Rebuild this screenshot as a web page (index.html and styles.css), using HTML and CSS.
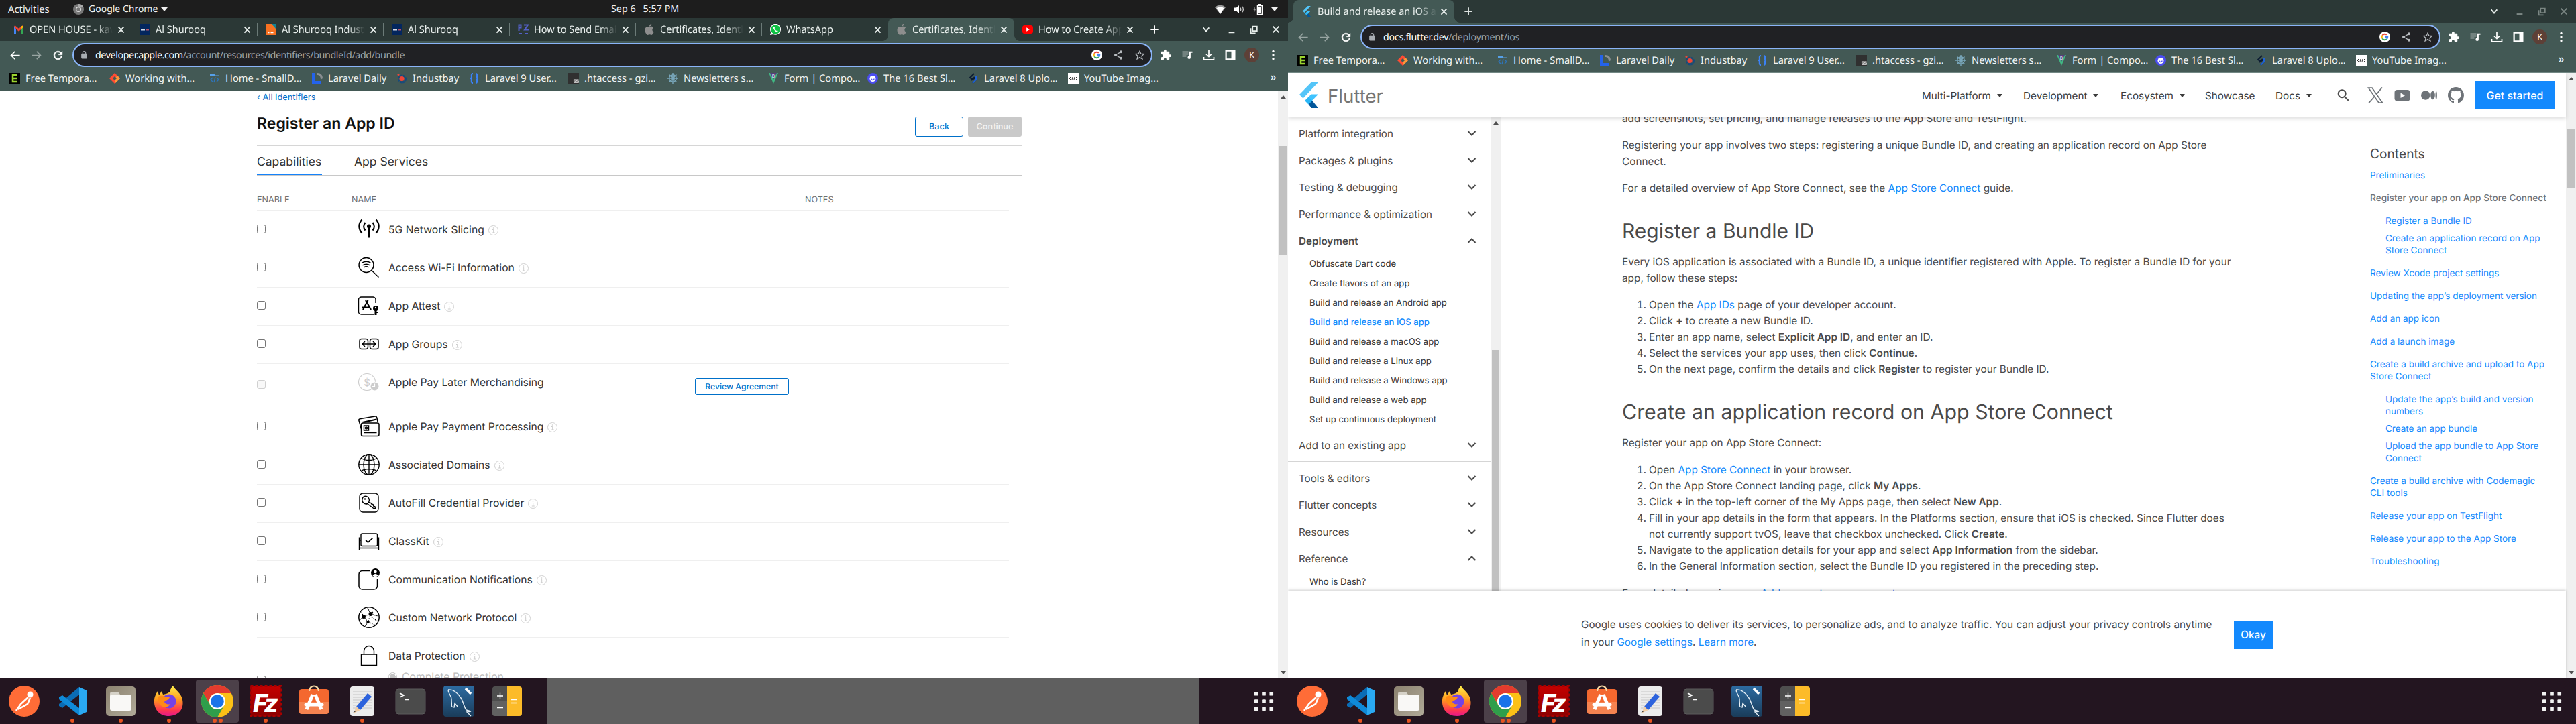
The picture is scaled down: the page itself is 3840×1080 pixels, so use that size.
FILE: index.html
```html
<!DOCTYPE html>
<html lang="en">
<head>
<meta charset="utf-8">
<title>Desktop</title>
<link rel="stylesheet" href="styles.css">
</head>
<body>
<svg class="sprite" aria-hidden="true">
  <defs>
    <linearGradient id="g-fire" x1="0" y1="0" x2="0" y2="1"><stop offset="0" stop-color="#fff04a"/><stop offset=".45" stop-color="#ff9a1e"/><stop offset=".8" stop-color="#ff3750"/><stop offset="1" stop-color="#e5178c"/></linearGradient>
    <linearGradient id="g-red" x1="0" y1="0" x2="0" y2="1"><stop offset="0" stop-color="#c40000"/><stop offset="1" stop-color="#8b0000"/></linearGradient>
    <linearGradient id="g-sea" x1="0" y1="0" x2="0" y2="1"><stop offset="0" stop-color="#2d6ca2"/><stop offset="1" stop-color="#1a3c5a"/></linearGradient>
    <linearGradient id="g-folder" x1="0" y1="0" x2="1" y2="1"><stop offset="0" stop-color="#8c8270"/><stop offset="1" stop-color="#b0aa98"/></linearGradient>
  </defs>
  <symbol id="back" viewBox="0 0 24 24"><path d="M21 11H6.8l5.6-5.6L11 4l-8 8 8 8 1.4-1.4L6.8 13H21z"/></symbol>
  <symbol id="fwd" viewBox="0 0 24 24"><path d="M3 11h14.200l-5.600-5.600L13 4l8 8-8 8-1.400-1.400 5.600-5.600H3z"/></symbol>
  <symbol id="reload" viewBox="0 0 24 24"><path d="M17.650 6.350A8 8 0 1 0 19.730 14h-2.080A6 6 0 1 1 12 6c1.660 0 3.140.690 4.220 1.780L13 11h7V4z" stroke="currentColor" stroke-width=".8"/></symbol>
  <symbol id="lock" viewBox="0 0 24 24"><path d="M18 8h-1V6A5 5 0 0 0 7 6v2H6a2 2 0 0 0-2 2v10c0 1.100.900 2 2 2h12a2 2 0 0 0 2-2V10a2 2 0 0 0-2-2zM9 6a3 3 0 0 1 6 0v2H9z"/></symbol>
  <symbol id="google" viewBox="0 0 24 24"><circle cx="12" cy="12" r="12" fill="#fff"/><g fill="none" stroke-width="3"><path d="M16.300 7.200A6.400 6.400 0 0 0 6.500 8.800" stroke="#ea4335"/><path d="M6.500 8.800a6.400 6.400 0 0 0 0 6.400" stroke="#fbbc05"/><path d="M6.500 15.200a6.400 6.400 0 0 0 9.800 1.600" stroke="#34a853"/><path d="M16.300 16.800a6.400 6.400 0 0 0 2.100-4.800H12" stroke="#4285f4"/></g></symbol>
  <symbol id="share" viewBox="0 0 24 24"><circle cx="18" cy="5" r="3"/><circle cx="6" cy="12" r="3"/><circle cx="18" cy="19" r="3"/><path d="M18 5L6 12l12 7" fill="none" stroke="currentColor" stroke-width="2"/></symbol>
  <symbol id="star" viewBox="0 0 24 24"><path d="M12 3l2.700 6.200 6.800.600-5.100 4.500 1.500 6.600L12 17.400l-5.900 3.500 1.500-6.600-5.100-4.500 6.800-.600z" fill="none" stroke="currentColor" stroke-width="1.900"/></symbol>
  <symbol id="puzzle" viewBox="0 0 24 24"><path d="M20.500 11H19V7c0-1.100-.900-2-2-2h-4V3.500a2.500 2.500 0 0 0-5 0V5H4c-1.100 0-2 .900-2 2v3.800h1.500a2.700 2.700 0 0 1 0 5.400H2V20c0 1.100.900 2 2 2h3.800v-1.500a2.700 2.700 0 0 1 5.400 0V22H17c1.100 0 2-.900 2-2v-4h1.500a2.500 2.500 0 0 0 0-5z"/></symbol>
  <symbol id="queue" viewBox="0 0 24 24"><path d="M2 5h12v2H2zM2 9h12v2H2zM2 13h8v2H2zM16 5h6v2.500h-3.500V17a3 3 0 1 1-2.500-3z"/></symbol>
  <symbol id="download" viewBox="0 0 24 24"><path d="M12 2v13M6.500 10l5.500 5.500 5.500-5.500M2 16v5h20v-5" fill="none" stroke="currentColor" stroke-width="2.300"/></symbol>
  <symbol id="panel" viewBox="0 0 24 24"><path d="M2 2h20v20H2zM5 5v14h9V5z" fill-rule="evenodd"/></symbol>
  <symbol id="dots" viewBox="0 0 24 24"><circle cx="12" cy="4.500" r="2.200"/><circle cx="12" cy="12" r="2.200"/><circle cx="12" cy="19.500" r="2.200"/></symbol>
  <symbol id="close" viewBox="0 0 16 16"><path d="M3 3l10 10M13 3L3 13" fill="none" stroke="currentColor" stroke-width="2.200"/></symbol>
  <symbol id="plus" viewBox="0 0 16 16"><path d="M8 1.500v13M1.500 8h13" fill="none" stroke="currentColor" stroke-width="2.200"/></symbol>
  <symbol id="chev" viewBox="0 0 16 16"><path d="M3 5l5 6 5-6" fill="none" stroke="currentColor" stroke-width="2"/></symbol>
  <symbol id="fold" viewBox="0 0 14 10"><path d="M1.500 2L7 7.500 12.500 2" fill="none" stroke="currentColor" stroke-width="2"/></symbol>
  <symbol id="min" viewBox="0 0 16 16"><path d="M3 11.500h10v2.500H3z"/></symbol>
  <symbol id="restore" viewBox="0 0 16 16"><path d="M6 3h7.500v7.500H6zM3 6v8h8" fill="none" stroke="currentColor" stroke-width="2"/></symbol>
  <symbol id="caret" viewBox="0 0 10 6"><path d="M0 0h10L5 6z"/></symbol>
  <symbol id="scroll-up" viewBox="0 0 10 6"><path d="M5 0l5 6H0z"/></symbol>

  <symbol id="f-gmail" viewBox="0 0 16 16"><path d="M1 4v10h3V7.500z" fill="#4285f4"/><path d="M15 4v10h-3V7.500z" fill="#34a853"/><path d="M1 3.500C2 2 3 2.500 4 3.500l4 3.200 4-3.200c1-1 2-1.500 3 0l-3 4-4 3.300-4-3.300z" fill="#ea4335"/><path d="M12 3.500c1.500-1.500 3-.500 3 1.200l-3 2.500z" fill="#fbbc04"/></symbol>
  <symbol id="f-shurooq" viewBox="0 0 16 16"><path d="M0 0h16v16H0z" fill="#03265e"/><path d="M2 7h6v2.500H2z" fill="#d5dbe6"/><path d="M9 7h5v2.500H9z" fill="#b8536a"/></symbol>
  <symbol id="f-doc" viewBox="0 0 16 16"><path d="M0 0h16v16H0z" fill="#0f8296"/><path d="M1 0h8l6 7v9H1z" fill="#f87121"/><path d="M4 12.500h8" stroke="#fff" stroke-width="1.500" stroke-dasharray="1.500 .5"/></symbol>
  <symbol id="f-pz" viewBox="0 0 16 16"><path d="M1.500 10V1.500h3v4h-3M9 1.500h6L10 8.500h6M2 14h4M10 14h5" fill="none" stroke="#5460c8" stroke-width="2"/></symbol>
  <symbol id="f-apple" viewBox="0 0 24 24"><path fill="#8e8e8e" d="M12.152 6.896c-.948 0-2.415-1.078-3.960-1.040-2.040.027-3.910 1.183-4.961 3.014-2.117 3.675-.546 9.103 1.519 12.090 1.013 1.454 2.208 3.090 3.792 3.039 1.520-.065 2.090-.987 3.935-.987 1.831 0 2.350.987 3.960.948 1.637-.026 2.676-1.480 3.676-2.948 1.156-1.688 1.636-3.325 1.662-3.415-.039-.013-3.182-1.221-3.220-4.857-.026-3.040 2.480-4.494 2.597-4.559-1.429-2.090-3.623-2.324-4.390-2.376-2-.156-3.675 1.090-4.610 1.090zM15.530 3.830c.843-1.012 1.400-2.427 1.245-3.830-1.207.052-2.662.805-3.532 1.818-.780.896-1.454 2.338-1.273 3.714 1.338.104 2.715-.688 3.559-1.701"/></symbol>
  <symbol id="f-whatsapp" viewBox="0 0 16 16"><path d="M0 16l1.200-4A8 8 0 1 1 4.500 15z" fill="#fff"/><circle cx="8" cy="8" r="6.800" fill="#0dc143"/><path d="M5 4.500c-1 2 2.500 7 5.500 7 1.500-.500 1.300-2 0-2.300-1 1-1 1-2.700-1C6.500 7 6.500 7 7 6 6.700 4.500 6 4 5 4.500z" fill="#fff"/></symbol>
  <symbol id="f-yt" viewBox="0 0 16 16"><rect y="2" width="16" height="12" rx="3.500" fill="#f00"/><path d="M6.200 5.300L11 8l-4.800 2.700z" fill="#fff"/></symbol>
  <symbol id="flutter" viewBox="0 0 28 38"><path d="M17.500 0H28L5.500 23.500 0 18z" fill="#54c5f8"/><path d="M28 17.500H17.500L8.300 27l5.400 5.500z" fill="#40c4ff"/><path d="M8.300 27l5.400-5.500 5.500 5.500-5.500 5.500z" fill="#29b6f6"/><path d="M13.700 32.500l5.500-5.500L28 38H18z" fill="#01579b"/></symbol>

  <symbol id="b-e" viewBox="0 0 16 16"><path d="M0 0h16v16H0z"/><path d="M0 0h16v16H0z" fill="#000"/><path d="M12 3H5v10h7M5 8h6" fill="none" stroke="#9bd42f" stroke-width="2.500"/></symbol>
  <symbol id="b-diamond" viewBox="0 0 16 16"><path d="M8 0l8 8-8 8-8-8z" fill="#ff4b33"/><path d="M8 16l8-8-4-4-4 4z" fill="#ff9738"/><path d="M8 5l3 3-3 3-3-3z" fill="#435955"/></symbol>
  <symbol id="b-code" viewBox="0 0 16 16"><path d="M1 2h7l1 1.500h6V5H1z" fill="#56a0e8"/><path d="M5 7L2 10l3 3M11 7l3 3-3 3M9 6l-2 8" fill="none" stroke="#2e74b9" stroke-width="1.400"/></symbol>
  <symbol id="b-l" viewBox="0 0 16 16"><path d="M0 0h4v12h9v4H0z" fill="#2463eb"/><path d="M8 0c5 0 8 3 8 8l-3 2c0-5-2-7-5-7z" fill="#8a8f92"/></symbol>
  <symbol id="b-ind" viewBox="0 0 16 16"><circle cx="8.500" cy="9" r="5" fill="none" stroke="#174a7c" stroke-width="3" stroke-dasharray="3 1"/><circle cx="8" cy="8.500" r="3.500" fill="#f04438"/><circle cx="3" cy="2.500" r="1.500" fill="#f04438"/></symbol>
  <symbol id="b-brace" viewBox="0 0 16 16"><path d="M6 1C3 1 4 5 4 6.500S2.500 8 2 8c.500 0 2 0 2 1.500S3 15 6 15M10 1c3 0 2 4 2 5.500S13.500 8 14 8c-.500 0-2 0-2 1.500S13 15 10 15" fill="none" stroke="#3b82f6" stroke-width="2.200"/></symbol>
  <symbol id="b-ss" viewBox="0 0 16 16"><path d="M0 0h16v16H0z" fill="#303030"/><path d="M11.500 10H8.500v2h2.500v2.200H8M15.500 10h-2.800v2h2.500v2.200H12" fill="none" stroke="#eee" stroke-width="1.100"/></symbol>
  <symbol id="b-wheel" viewBox="0 0 16 16"><g fill="none" stroke="#79a7bb" stroke-width="1.400"><circle cx="8" cy="8" r="5.300"/><circle cx="8" cy="8" r="2"/><path d="M8 0v16M0 8h16M2.500 2.500l11 11M13.500 2.500l-11 11"/></g></symbol>
  <symbol id="b-slack" viewBox="0 0 16 16"><circle cx="8" cy="8" r="8" fill="#4b4df0"/><circle cx="8" cy="8.500" r="4.500" fill="#fff"/><path d="M6 8.500a2 2 0 0 0 4 0" fill="none" stroke="#4b4df0" stroke-width="1.300"/></symbol>
  <symbol id="b-lara" viewBox="0 0 16 16"><path d="M9 1L3 7l4 3 4-4M7 15l5-5-3-3-4 4" fill="none" stroke="#0d1d33" stroke-width="2"/><path d="M7 15l5-5V4" fill="none" stroke="#1e63d8" stroke-width="2"/></symbol>
  <symbol id="b-tag" viewBox="0 0 16 16"><path d="M0 0h16v16H0z" fill="#fff"/><path d="M4 6L2 8l2 2M12 6l2 2-2 2M7 6l-1 4M10 6l-1 4" fill="none" stroke="#333" stroke-width="1"/></symbol>

  <symbol id="c-5g" viewBox="0 0 32 32"><g fill="none" stroke="#000" stroke-width="2.200"><path d="M5.500 1.500c-5.500 6-5.500 14 0 20M26.500 1.500c5.500 6 5.500 14 0 20M10.500 6c-3 3.500-3 8 0 11.500M21.500 6c3 3.500 3 8 0 11.500"/><path d="M16 12v16.500" stroke-width="3"/></g><circle cx="16" cy="11.500" r="3" fill="#000"/></symbol>
  <symbol id="c-wifi" viewBox="0 0 32 32"><g fill="none" stroke="#000" stroke-width="1.400"><circle cx="12" cy="12.500" r="11"/><path d="M20 20.500l10.500 10"/><path d="M5 9.500c4.500-2.800 9.500-2.800 14 0M6.500 12.800c3.500-2 7.500-2 11 0M8.500 15.800c2.200-1.300 4.800-1.300 7 0"/></g></symbol>
  <symbol id="c-attest" viewBox="0 0 32 32"><path d="M26 12V7a4 4 0 0 0-4-4H4.500a4 4 0 0 0-4 4v18a4 4 0 0 0 4 4H24" fill="none" stroke="#000" stroke-width="1.400"/><path d="M11 8l8 14M14.500 8L7 22M5 18.500h13" fill="none" stroke="#000" stroke-width="2.200"/><circle cx="26" cy="20" r="4" fill="#000"/><path d="M24.500 20h3v10h-3zM27 25h2v2h-2z" fill="#000"/><circle cx="26" cy="19" r="1.200" fill="#fff"/></symbol>
  <symbol id="c-groups" viewBox="0 0 32 32"><g fill="none" stroke="#000" stroke-width="1.500"><rect x="2" y="8.500" width="12.500" height="15" rx="3"/><rect x="17.500" y="8.500" width="12.500" height="15" rx="3"/><path d="M6 16h20M10 12l-4 4 4 4M22 12l4 4-4 4"/></g></symbol>
  <symbol id="c-pay" viewBox="0 0 32 32"><g fill="none" stroke="#000" stroke-width="1.500"><path d="M4.500 20L1 7.500C.500 6 1 5 2.500 4.700L25 1c1.500-.200 2.500.500 2.800 2L29 9"/><rect x="4.500" y="11" width="26.500" height="19.500" rx="2.500"/><rect x="8.500" y="15" width="7" height="7"/><circle cx="12" cy="18.500" r="1.500"/><path d="M8.500 25.500h19"/></g><path d="M6 9l21-4.500.500 2L8 11z" fill="#000"/></symbol>
  <symbol id="c-globe" viewBox="0 0 32 32"><g fill="none" stroke="#000" stroke-width="1.400"><circle cx="16" cy="16" r="15.200"/><ellipse cx="16" cy="16" rx="8" ry="15.200"/><path d="M16 1v30M1 16h30M4.500 6.500c6 4 17 4 23 0M4.500 25.500c6-4 17-4 23 0"/></g></symbol>
  <symbol id="c-key" viewBox="0 0 32 32"><g fill="none" stroke="#000" stroke-width="1.400"><rect x="2" y="2" width="28" height="28" rx="5"/><path d="M15.500 15.500c2-3.500.500-7-2-8.500s-6-.500-7 2-1 5.500 1.500 7.500 4.500 1.500 5.500 1l10 7.500 1.800-.500-.200-2.500-2.500-1-.500-2.500-2.500-.500-.500-1.500z"/></g><circle cx="10" cy="10.500" r="1.300"/></symbol>
  <symbol id="c-class" viewBox="0 0 32 32"><g fill="none" stroke="#000" stroke-width="1.400"><rect x="4" y="5" width="24.500" height="18.500" rx="2"/><path d="M1.500 10.500v18.500M30.500 10.500v18.500M1.500 26.500h29M1.500 15H4M28.500 15h2" /><path d="M11 14.500l3.500 3.500 7-6.500" stroke-width="1.700"/></g></symbol>
  <symbol id="c-comm" viewBox="0 0 32 32"><path d="M17 3.500H6a5 5 0 0 0-5 5V26a5 5 0 0 0 5 5h17.500a5 5 0 0 0 5-5V15" fill="none" stroke="#000" stroke-width="1.500"/><circle cx="25.500" cy="6.500" r="6.500" fill="#000"/><circle cx="25.500" cy="5" r="2.300" fill="#fff"/><path d="M21.500 10.500c1-3.500 7-3.500 8 0-2 2-6 2-8 0z" fill="#fff"/></symbol>
  <symbol id="c-net" viewBox="0 0 32 32"><circle cx="16" cy="16" r="15.200" fill="none" stroke="#000" stroke-width="1.500"/><path d="M8 15L18.500 11 14.500 23zM8 15L4 6M18.500 11L14 2M18.500 11l11 3M18.500 11l7-6M14.500 23l10 4M14.500 23l-4 6M8 15l-6 5M20 16l9 6" fill="none" stroke="#000" stroke-width="1.200" stroke-dasharray="1.500 1.500"/><g fill="#000"><circle cx="8" cy="15" r="3"/><circle cx="18.500" cy="11" r="3"/><circle cx="14.500" cy="23" r="2.300"/></g></symbol>
  <symbol id="c-lock" viewBox="0 0 32 32"><path d="M4.500 14h23v16.500h-23zM8.500 14V9a7.500 7.500 0 0 1 15 0v5" fill="none" stroke="#000" stroke-width="1.400"/></symbol>
  <symbol id="info" viewBox="0 0 15 15"><circle cx="7.500" cy="7.500" r="7" fill="none" stroke="#d0d0d0"/><path d="M6 6.500h1.700V11M5.800 11h4" fill="none" stroke="#ccc"/><circle cx="7.500" cy="4" r=".8" fill="#ccc"/></symbol>

  <symbol id="d-postman" viewBox="0 0 48 48"><circle cx="24" cy="24" r="23" fill="#ff6c37"/><circle cx="33" cy="14" r="4.500" fill="#fff"/><path d="M30 18L19 28l-7 10M33 19l-4 9-14 8" fill="none" stroke="#fff" stroke-width="2.500"/></symbol>
  <symbol id="d-code" viewBox="0 0 48 48"><path d="M34 3v11L9 34l-5-3v-3z" fill="#0a6cb5"/><path d="M34 45V34L9 15l-5 3v3z" fill="#0f8ad8"/><path d="M34 3l11 5v32l-11 5z" fill="#2aa9f2"/></symbol>
  <symbol id="d-files" viewBox="0 0 48 48"><rect x="2" y="2" width="44" height="44" rx="5" fill="url(#g-folder)"/><path d="M8 13c0-2 1-3 3-3h9l3 4v6H8z" fill="#d6d2c8"/><rect x="8" y="14" width="32" height="24" rx="3" fill="#f9f8f6"/></symbol>
  <symbol id="d-firefox" viewBox="0 0 48 48"><path d="M30 1c2 5 8 8 12 15 6 12 2 29-18 30C8 46 1 34 2 22c0-4 2-8 5-13l2 6 4-6 2 5c5-1 8-2 10-4 1-4 3-7 5-9z" fill="url(#g-fire)"/><circle cx="24" cy="24" r="10.500" fill="#7542e5"/><path d="M8 17c4-2 8-2 11 1h6c-2 5-6 4-8 7 2 4 6 4 9 3-4 7-14 6-17-2-1-3-2-6-1-9z" fill="#ff8a16"/></symbol>
  <symbol id="d-chrome" viewBox="0 0 48 48"><circle cx="24" cy="24" r="24" fill="#fbc116"/><path d="M3.200 12a24 24 0 0 1 41.600 0H24a12 12 0 0 0-10.400 18z" fill="#e33b2e"/><path d="M3.200 12a24 24 0 0 0 20.800 36l10.400-18a12 12 0 0 1-20.800 0z" fill="#2f9e4b"/><circle cx="24" cy="24" r="12" fill="#fff"/><circle cx="24" cy="24" r="9.800" fill="#1a73e8"/></symbol>
  <symbol id="d-store" viewBox="0 0 48 48"><rect x="2" y="6" width="44" height="37" rx="4" fill="#f4682f"/><path d="M2 25h44v14a4 4 0 0 1-4 4H6a4 4 0 0 1-4-4z" fill="#f58350"/><path d="M17 9c0-10 14-10 14 0" fill="none" stroke="#f7d9a5" stroke-width="2.200"/><path d="M22 14L13 36M26 14l9 22" fill="none" stroke="#fff" stroke-width="5"/><path d="M12 29h24" stroke="#fff" stroke-width="5" stroke-linecap="round"/></symbol>
  <symbol id="d-text" viewBox="0 0 48 48"><rect x="6" y="2" width="36" height="44" rx="4" fill="#ececec"/><path d="M10 10h28M10 14h28M10 18h28M10 22h28M10 26h28M10 30h28M10 34h28" stroke="#c6c6c6"/><path d="M32 12l6 5-17 20-6-5z" fill="#2d63dd"/><path d="M15 32l6 5-10 5z" fill="#f3cfa6"/><path d="M12.500 38l1.500 1.500L10.500 41z" fill="#444"/></symbol>
  <symbol id="d-term" viewBox="0 0 48 48"><rect x="2" y="6" width="44" height="37" rx="4" fill="#4b4b4b" stroke="#5c5c5c"/><path d="M8 12l6 3-6 3M15 21.500h7" fill="none" stroke="#fff" stroke-width="1.700"/></symbol>
  <symbol id="d-mysql" viewBox="0 0 48 48"><rect x="1" y="1" width="46" height="46" rx="4" fill="url(#g-sea)"/><path d="M8 7c8-1 14 4 19 12 4 6 4 12 8 18l7 2-6 1 6 6M8 7c0 6 5 8 5 14s1 8 0 11l4 1 1-6 5 6" fill="none" stroke="#e9f1f7" stroke-width="1.400"/><path d="M34 5l8 8" stroke="#fff" stroke-width="3.500"/></symbol>
  <symbol id="d-calc" viewBox="0 0 48 48"><rect x="2" y="2" width="44" height="44" rx="4" fill="#4e4e4e"/><path d="M2 24h22v22H6a4 4 0 0 1-4-4z" fill="#616161"/><path d="M24 2h18a4 4 0 0 1 4 4v36a4 4 0 0 1-4 4H24z" fill="#fcbb28"/><path d="M9 16h9M13.500 11.500v9M9 33.500h9M29 21.500h10M29 26.500h10" stroke="#fff" stroke-width="1.300"/></symbol>
  <symbol id="d-grid" viewBox="0 0 32 32"><g fill="#f2f2f2"><rect x="1" y="1" width="6" height="6" rx="1"/><rect x="13" y="1" width="6" height="6" rx="1"/><rect x="25" y="1" width="6" height="6" rx="1"/><rect x="1" y="13" width="6" height="6" rx="1"/><rect x="13" y="13" width="6" height="6" rx="1"/><rect x="25" y="13" width="6" height="6" rx="1"/><rect x="1" y="25" width="6" height="6" rx="1"/><rect x="13" y="25" width="6" height="6" rx="1"/><rect x="25" y="25" width="6" height="6" rx="1"/></g></symbol>
</svg>

<div class="desktop">
  <section class="screen">
    <div class="topbar">
      <span class="activities">Activities</span>
      <svg class="app-ico" viewBox="0 0 16 16"><circle cx="8" cy="8" r="8" fill="#777"/><path d="M8 0a8 8 0 0 1 7.500 5H8z" fill="#aaa"/><circle cx="8" cy="8" r="4" fill="#ddd"/><circle cx="8" cy="8" r="2.800" fill="#777"/></svg>
      <span class="app-name">Google Chrome</span><svg class="tri"><use href="#caret"/></svg>
      <span class="clock"><span>Sep 6</span><span>5:57 PM</span></span>
      <span class="tray">
        <svg viewBox="0 0 16 16"><path d="M0 5C4 .500 12 .500 16 5l-8 10z" fill="#9a9a9a"/><path d="M2.500 6.500c3-3 8-3 11 0L8 15z" fill="#fff"/></svg>
        <svg viewBox="0 0 16 16"><path d="M1 5.500h3L8 2v12l-4-3.500H1z" fill="#fff"/><path d="M10 5.500c1 1.500 1 3.500 0 5M12.500 3.500c2.500 2.500 2.500 6.500 0 9" fill="none" stroke="#ccc" stroke-width="1.300"/></svg>
        <svg viewBox="0 0 16 16"><path d="M7.500 2.500h7v13h-7z" fill="none" stroke="#fff" stroke-width="1.500"/><path d="M9 0h4v2H9zM9 5h4v9H9z" fill="#fff"/><path d="M4 4L1.500 9h2L2.500 13 5 8H3.500z" fill="#999"/></svg>
        <svg class="tri"><use href="#caret"/></svg>
      </span>
    </div>
    <div class="tabstrip">
      <div class="tab"><svg><use href="#f-gmail"/></svg><span class="t">OPEN HOUSE - kavya</span><svg class="x"><use href="#close"/></svg></div>
      <div class="tab"><svg><use href="#f-shurooq"/></svg><span class="t">Al Shurooq</span><svg class="x"><use href="#close"/></svg></div>
      <div class="tab"><svg><use href="#f-doc"/></svg><span class="t">Al Shurooq Industries</span><svg class="x"><use href="#close"/></svg></div>
      <div class="tab"><svg><use href="#f-shurooq"/></svg><span class="t">Al Shurooq</span><svg class="x"><use href="#close"/></svg></div>
      <div class="tab"><svg><use href="#f-pz"/></svg><span class="t">How to Send Email in</span><svg class="x"><use href="#close"/></svg></div>
      <div class="tab"><svg><use href="#f-apple"/></svg><span class="t">Certificates, Identifiers</span><svg class="x"><use href="#close"/></svg></div>
      <div class="tab nosep"><svg><use href="#f-whatsapp"/></svg><span class="t">WhatsApp</span><svg class="x"><use href="#close"/></svg></div>
      <div class="tab active"><svg><use href="#f-apple"/></svg><span class="t">Certificates, Identifiers</span><svg class="x"><use href="#close"/></svg></div>
      <div class="tab"><svg><use href="#f-yt"/></svg><span class="t">How to Create Apple</span><svg class="x"><use href="#close"/></svg></div>
      <svg class="new"><use href="#plus"/></svg>
      <span class="winctl"><svg><use href="#chev"/></svg><svg><use href="#min"/></svg><svg><use href="#restore"/></svg><svg><use href="#close"/></svg></span>
    </div>
    <div class="toolbar">
      <span class="btn"><svg><use href="#back"/></svg></span><span class="btn dim"><svg><use href="#fwd"/></svg></span><span class="btn"><svg><use href="#reload"/></svg></span>
      <div class="omnibox"><svg class="lk"><use href="#lock"/></svg><span class="url"><b>developer.apple.com</b>/account/resources/identifiers/bundleId/add/bundle</span>
        <span class="btn"><svg class="goog"><use href="#google"/></svg></span><span class="btn"><svg><use href="#share"/></svg></span><span class="btn"><svg><use href="#star"/></svg></span></div>
      <span class="btn"><svg><use href="#puzzle"/></svg></span><span class="btn"><svg><use href="#queue"/></svg></span><span class="btn"><svg><use href="#download"/></svg></span><span class="btn"><svg><use href="#panel"/></svg></span><span class="btn"><span class="avatar">K</span></span><span class="btn"><svg><use href="#dots"/></svg></span>
    </div>
    <div class="bookmarks">
      <span><svg><use href="#b-e"/></svg>Free Tempora…</span><span><svg><use href="#b-diamond"/></svg>Working with…</span><span><svg><use href="#b-code"/></svg>Home - SmallD…</span><span><svg><use href="#b-l"/></svg>Laravel Daily</span><span><svg><use href="#b-ind"/></svg>Industbay</span><span><svg><use href="#b-brace"/></svg>Laravel 9 User…</span><span><svg><use href="#b-ss"/></svg>.htaccess - gzi…</span><span><svg><use href="#b-wheel"/></svg>Newsletters s…</span><span><svg viewBox="0 0 16 16"><path d="M1 0h14L8 16z" fill="#41b883"/><path d="M3 0h10L8 10z" fill="#563d7c"/><text class="vue-b" x="8" y="6.500">B</text></svg>Form | Compo…</span><span><svg><use href="#b-slack"/></svg>The 16 Best Sl…</span><span><svg><use href="#b-lara"/></svg>Laravel 8 Uplo…</span><span><svg><use href="#b-tag"/></svg>YouTube Imag…</span><span class="more">»</span>
    </div>
    <div class="viewport">
      <main class="apple">
        <a class="crumb">‹ All Identifiers</a>
        <div class="head"><h1>Register an App ID</h1><span class="b outline">Back</span><span class="b off">Continue</span></div>
        <nav class="pagetabs"><span class="on">Capabilities</span><span>App Services</span></nav>
        <div class="table">
          <div class="row th"><span>ENABLE</span><span>NAME</span><span class="notes">NOTES</span></div>
          <div class="row"><i class="cb"></i><svg class="ci"><use href="#c-5g"/></svg><span class="nm">5G Network Slicing<svg><use href="#info"/></svg></span></div>
          <div class="row"><i class="cb"></i><svg class="ci"><use href="#c-wifi"/></svg><span class="nm">Access Wi-Fi Information<svg><use href="#info"/></svg></span></div>
          <div class="row"><i class="cb"></i><svg class="ci"><use href="#c-attest"/></svg><span class="nm">App Attest<svg><use href="#info"/></svg></span></div>
          <div class="row"><i class="cb"></i><svg class="ci"><use href="#c-groups"/></svg><span class="nm">App Groups<svg><use href="#info"/></svg></span></div>
          <div class="row tall"><i class="cb disabled"></i><svg class="ci" viewBox="0 0 32 32"><circle cx="13" cy="16" r="12.500" fill="none" stroke="#ccc" stroke-width="1.200"/><text class="dollar" x="13" y="21.500">$</text><circle cx="24.500" cy="22.500" r="7" fill="#fff"/><circle cx="24.500" cy="22.500" r="6" fill="#ccc"/><path d="M24.500 18.500v4h-4" fill="none" stroke="#fff" stroke-width="1.200"/></svg><span class="nm">Apple Pay Later Merchandising</span><span class="b outline review">Review Agreement</span></div>
          <div class="row"><i class="cb"></i><svg class="ci"><use href="#c-pay"/></svg><span class="nm">Apple Pay Payment Processing<svg><use href="#info"/></svg></span></div>
          <div class="row"><i class="cb"></i><svg class="ci"><use href="#c-globe"/></svg><span class="nm">Associated Domains<svg><use href="#info"/></svg></span></div>
          <div class="row"><i class="cb"></i><svg class="ci"><use href="#c-key"/></svg><span class="nm">AutoFill Credential Provider<svg><use href="#info"/></svg></span></div>
          <div class="row"><i class="cb"></i><svg class="ci"><use href="#c-class"/></svg><span class="nm">ClassKit<svg><use href="#info"/></svg></span></div>
          <div class="row"><i class="cb"></i><svg class="ci"><use href="#c-comm"/></svg><span class="nm">Communication Notifications<svg><use href="#info"/></svg></span></div>
          <div class="row"><i class="cb"></i><svg class="ci"><use href="#c-net"/></svg><span class="nm">Custom Network Protocol<svg><use href="#info"/></svg></span></div>
          <div class="row last"><span></span><svg class="ci"><use href="#c-lock"/></svg><span class="nm">Data Protection<svg><use href="#info"/></svg></span></div>
          <div class="option"><i class="cb"></i><i class="radio"></i><span>Complete Protection</span></div>
        </div>
      </main>
      <div class="scrollbar apple-sb"><svg class="up"><use href="#scroll-up"/></svg><i class="thumb"></i><svg class="down"><use href="#caret"/></svg></div>
    </div>
    <div class="dock">
      <div class="dock-icons">
        <span><svg><use href="#d-postman"/></svg></span><span class="run"><svg><use href="#d-code"/></svg></span><span class="run"><svg><use href="#d-files"/></svg></span><span class="run"><svg><use href="#d-firefox"/></svg></span><span class="run twice"><svg><use href="#d-chrome"/></svg></span><span class="run"><svg viewBox="0 0 48 48"><rect x="1.500" y="1.500" width="45" height="45" fill="url(#g-red)" stroke="#a80000" stroke-width="3" stroke-dasharray="4 3"/><text class="fz" x="22" y="40">Fz</text></svg></span><span><svg><use href="#d-store"/></svg></span><span class="run"><svg><use href="#d-text"/></svg></span><span><svg><use href="#d-term"/></svg></span><span><svg><use href="#d-mysql"/></svg></span><span><svg><use href="#d-calc"/></svg></span>
      </div>
      <div class="dock-fill"></div>
      <div class="dock-end"><svg><use href="#d-grid"/></svg></div>
    </div>
  </section>

  <section class="screen second">
    <div class="tabstrip">
      <div class="tab active wide"><svg><use href="#flutter"/></svg><span class="t">Build and release an iOS app</span><svg class="x"><use href="#close"/></svg></div>
      <svg class="new"><use href="#plus"/></svg>
      <span class="winctl"><svg><use href="#chev"/></svg><svg><use href="#min"/></svg><svg><use href="#restore"/></svg><svg><use href="#close"/></svg></span>
    </div>
    <div class="toolbar">
      <span class="btn dim"><svg><use href="#back"/></svg></span><span class="btn dim"><svg><use href="#fwd"/></svg></span><span class="btn"><svg><use href="#reload"/></svg></span>
      <div class="omnibox"><svg class="lk"><use href="#lock"/></svg><span class="url"><b>docs.flutter.dev</b>/deployment/ios</span>
        <span class="btn"><svg class="goog"><use href="#google"/></svg></span><span class="btn"><svg><use href="#share"/></svg></span><span class="btn"><svg><use href="#star"/></svg></span></div>
      <span class="btn"><svg><use href="#puzzle"/></svg></span><span class="btn"><svg><use href="#queue"/></svg></span><span class="btn"><svg><use href="#download"/></svg></span><span class="btn"><svg><use href="#panel"/></svg></span><span class="btn"><span class="avatar">K</span></span><span class="btn"><svg><use href="#dots"/></svg></span>
    </div>
    <div class="bookmarks">
      <span><svg><use href="#b-e"/></svg>Free Tempora…</span><span><svg><use href="#b-diamond"/></svg>Working with…</span><span><svg><use href="#b-code"/></svg>Home - SmallD…</span><span><svg><use href="#b-l"/></svg>Laravel Daily</span><span><svg><use href="#b-ind"/></svg>Industbay</span><span><svg><use href="#b-brace"/></svg>Laravel 9 User…</span><span><svg><use href="#b-ss"/></svg>.htaccess - gzi…</span><span><svg><use href="#b-wheel"/></svg>Newsletters s…</span><span><svg viewBox="0 0 16 16"><path d="M1 0h14L8 16z" fill="#41b883"/><path d="M3 0h10L8 10z" fill="#563d7c"/><text class="vue-b" x="8" y="6.500">B</text></svg>Form | Compo…</span><span><svg><use href="#b-slack"/></svg>The 16 Best Sl…</span><span><svg><use href="#b-lara"/></svg>Laravel 8 Uplo…</span><span><svg><use href="#b-tag"/></svg>YouTube Imag…</span><span class="more">»</span>
    </div>
    <div class="viewport">
      <div class="flutter">
        <header class="site">
          <svg class="logo"><use href="#flutter"/></svg><span class="brand">Flutter</span>
          <nav><span class="n1">Multi-Platform<svg><use href="#caret"/></svg></span><span class="n2">Development<svg><use href="#caret"/></svg></span><span class="n3">Ecosystem<svg><use href="#caret"/></svg></span><span class="n4">Showcase</span><span class="n5">Docs<svg><use href="#caret"/></svg></span></nav>
          <div class="social">
            <svg viewBox="0 0 24 24"><path d="M10 3.500a6 6 0 1 1 0 12 6 6 0 0 1 0-12zM14.300 14.300l6.200 6.200" fill="none" stroke="#4a4a4a" stroke-width="2.200"/></svg>
            <svg viewBox="0 0 24 24"><path d="M1.500 1h5.500l15.500 22H17zM22 .500L14 10M10 14.500L2 23.500" fill="none" stroke="#6e7378" stroke-width="1.700"/></svg>
            <svg viewBox="0 0 24 24"><rect x=".5" y="4" width="23" height="16.500" rx="4" fill="#6e7378"/><path d="M9.500 8.500l6.500 3.700-6.500 3.700z" fill="#fff"/></svg>
            <svg viewBox="0 0 24 24"><g fill="#6e7378"><circle cx="6.700" cy="12" r="6.700"/><ellipse cx="17.500" cy="12" rx="3.300" ry="6.300"/><ellipse cx="22.700" cy="12" rx="1.200" ry="5.700"/></g></svg>
            <svg viewBox="0 0 16 16"><path fill="#6e7378" d="M8 0C3.580 0 0 3.580 0 8c0 3.540 2.290 6.530 5.470 7.590.400.070.550-.170.550-.380 0-.190-.010-.820-.010-1.490-2.010.370-2.530-.490-2.690-.940-.090-.230-.480-.940-.820-1.130-.280-.150-.680-.520-.010-.530.630-.010 1.080.580 1.230.820.720 1.210 1.870.870 2.330.660.070-.520.280-.870.510-1.070-1.780-.200-3.640-.890-3.640-3.950 0-.870.310-1.590.820-2.150-.080-.200-.360-1.020.080-2.120 0 0 .670-.210 2.200.820.640-.180 1.320-.270 2-.270s1.360.090 2 .270c1.530-1.040 2.200-.820 2.200-.820.440 1.100.160 1.920.080 2.120.510.560.820 1.270.820 2.150 0 3.070-1.870 3.750-3.650 3.950.290.250.540.730.540 1.480 0 1.070-.010 1.930-.010 2.200 0 .210.150.460.550.380A8.010 8.010 0 0 0 16 8c0-4.420-3.580-8-8-8z"/></svg>
          </div>
          <span class="cta">Get started</span>
        </header>
        <div class="cols">
          <aside class="side">
            <div class="menu">
              <p>Platform integration<svg><use href="#fold"/></svg></p>
              <p>Packages &amp; plugins<svg><use href="#fold"/></svg></p>
              <p>Testing &amp; debugging<svg><use href="#fold"/></svg></p>
              <p>Performance &amp; optimization<svg><use href="#fold"/></svg></p>
              <p class="cur">Deployment<svg class="flip"><use href="#fold"/></svg></p>
              <ul><li>Obfuscate Dart code</li><li>Create flavors of an app</li><li>Build and release an Android app</li><li class="here">Build and release an iOS app</li><li>Build and release a macOS app</li><li>Build and release a Linux app</li><li>Build and release a Windows app</li><li>Build and release a web app</li><li>Set up continuous deployment</li></ul>
              <p>Add to an existing app<svg><use href="#fold"/></svg></p>
              <hr>
              <p>Tools &amp; editors<svg><use href="#fold"/></svg></p>
              <p>Flutter concepts<svg><use href="#fold"/></svg></p>
              <p>Resources<svg><use href="#fold"/></svg></p>
              <p>Reference<svg class="flip"><use href="#fold"/></svg></p>
              <ul><li>Who is Dash?</li></ul>
            </div>
            <div class="scrollbar side-sb"><svg class="up"><use href="#scroll-up"/></svg><i class="thumb"></i></div>
          </aside>
          <article>
            <p>add screenshots, set pricing, and manage releases to the App Store and TestFlight.</p>
            <p>Registering your app involves two steps: registering a unique Bundle ID, and creating an application record on App Store<br>Connect.</p>
            <p>For a detailed overview of App Store Connect, see the <a>App Store Connect</a> guide.</p>
            <h2>Register a Bundle ID</h2>
            <p>Every iOS application is associated with a Bundle ID, a unique identifier registered with Apple. To register a Bundle ID for your<br>app, follow these steps:</p>
            <ol><li>Open the <a>App IDs</a> page of your developer account.</li><li>Click <b>+</b> to create a new Bundle ID.</li><li>Enter an app name, select <b>Explicit App ID</b>, and enter an ID.</li><li>Select the services your app uses, then click <b>Continue</b>.</li><li>On the next page, confirm the details and click <b>Register</b> to register your Bundle ID.</li></ol>
            <h2 class="long">Create an application record on App Store Connect</h2>
            <p>Register your app on App Store Connect:</p>
            <ol><li>Open <a>App Store Connect</a> in your browser.</li><li>On the App Store Connect landing page, click <b>My Apps</b>.</li><li>Click <b>+</b> in the top-left corner of the My Apps page, then select <b>New App</b>.</li><li>Fill in your app details in the form that appears. In the Platforms section, ensure that iOS is checked. Since Flutter does<br>not currently support tvOS, leave that checkbox unchecked. Click <b>Create</b>.</li><li>Navigate to the application details for your app and select <b>App Information</b> from the sidebar.</li><li>In the General Information section, select the Bundle ID you registered in the preceding step.</li></ol>
            <p>For a detailed overview, see <a>Add an app to your account</a>.</p>
          </article>
          <aside class="toc">
            <h3>Contents</h3>
            <ul>
              <li>Preliminaries</li>
              <li><span class="at">Register your app on App Store Connect</span>
                <ul><li>Register a Bundle ID</li><li>Create an application record on App<br>Store Connect</li></ul></li>
              <li>Review Xcode project settings</li>
              <li>Updating the app’s deployment version</li>
              <li>Add an app icon</li>
              <li>Add a launch image</li>
              <li>Create a build archive and upload to App<br>Store Connect
                <ul><li>Update the app’s build and version<br>numbers</li><li>Create an app bundle</li><li>Upload the app bundle to App Store<br>Connect</li></ul></li>
              <li>Create a build archive with Codemagic<br>CLI tools</li>
              <li>Release your app on TestFlight</li>
              <li>Release your app to the App Store</li>
              <li>Troubleshooting</li>
            </ul>
          </aside>
        </div>
        <div class="cookies"><p>Google uses cookies to deliver its services, to personalize ads, and to analyze traffic. You can adjust your privacy controls anytime<br>in your <a>Google settings</a>. <a>Learn more</a>.</p><span class="okay">Okay</span></div>
      </div>
      <div class="scrollbar flutter-sb"><svg class="up"><use href="#scroll-up"/></svg><i class="thumb"></i><svg class="down"><use href="#caret"/></svg></div>
    </div>
    <div class="dock">
      <div class="dock-icons">
        <span><svg><use href="#d-postman"/></svg></span><span class="run"><svg><use href="#d-code"/></svg></span><span class="run"><svg><use href="#d-files"/></svg></span><span class="run"><svg><use href="#d-firefox"/></svg></span><span class="run twice"><svg><use href="#d-chrome"/></svg></span><span class="run"><svg viewBox="0 0 48 48"><rect x="1.500" y="1.500" width="45" height="45" fill="url(#g-red)" stroke="#a80000" stroke-width="3" stroke-dasharray="4 3"/><text class="fz" x="22" y="40">Fz</text></svg></span><span><svg><use href="#d-store"/></svg></span><span class="run"><svg><use href="#d-text"/></svg></span><span><svg><use href="#d-term"/></svg></span><span><svg><use href="#d-mysql"/></svg></span><span><svg><use href="#d-calc"/></svg></span>
      </div>
      <div class="dock-fill"></div>
      <div class="dock-end"><svg><use href="#d-grid"/></svg></div>
    </div>
  </section>
</div>
</body>
</html>
```
FILE: styles.css
```css
* { box-sizing: border-box; }
body { margin: 0; text-rendering: geometricPrecision; }
p, h1, h2, h3, ul { margin: 0; padding: 0; font-weight: 400; }
ul { list-style: none; }
svg { fill: currentColor; display: block; flex: none; }
.sprite { position: absolute; width: 0; height: 0; }

.desktop { display: flex; width: 3840px; height: 1080px; overflow: hidden; }
.screen { width: 1920px; height: 1080px; display: flex; flex-direction: column; font-family: "Noto Sans", sans-serif; }

/* GNOME top bar */
.topbar { height: 27px; flex: none; background: #1d1d1d; color: #f0f0f0; display: grid; grid-template-columns: 97px 16px 7px auto auto 1fr auto; align-items: center; padding: 0 12px; font-size: 14px; position: relative; }
.topbar .activities { font-size: 14.800px; }
.topbar .app-ico { width: 16px; height: 16px; }
.topbar .app-name { grid-column: 4; }
.topbar .tri { width: 10px; height: 6px; margin-left: 5px; }
.clock { position: absolute; left: 911px; display: flex; gap: 11px; font-size: 14.300px; }
.tray { grid-column: 7; display: flex; align-items: center; gap: 12px; padding-right: 3px; }
.tray svg { width: 16px; height: 16px; }
.tray .tri { margin-left: 0; }

/* Browser frame */
.tabstrip { height: 34px; flex: none; background: #2b3836; display: flex; align-items: stretch; padding-left: 8px; color: #e9efed; font-size: 14.500px; }
.tab { width: 188px; display: flex; align-items: center; padding: 0 8px 0 12px; position: relative; }
.tab > svg { width: 16px; height: 16px; }
.tab .t { flex: 1; margin-left: 8px; overflow: hidden; white-space: nowrap; -webkit-mask-image: linear-gradient(90deg, #000 98px, transparent 124px); mask-image: linear-gradient(90deg, #000 98px, transparent 124px); }
.tab > .x { width: 13px; height: 13px; margin-left: 6px; margin-right: 1px; }
.tab::after { content: ""; position: absolute; right: 0; top: 7px; width: 1px; height: 20px; background: #6b7a77; }
.tab.nosep::after, .tab.active::after { display: none; }
.tab.active { background: #435955; border-radius: 8px 8px 0 0; }
.tab.active::before { content: ""; position: absolute; left: -8px; right: -8px; bottom: 0; height: 8px; background: radial-gradient(circle at 0 0, transparent 7.500px, #435955 8px) left / 8px 8px no-repeat, radial-gradient(circle at 100% 0, transparent 7.500px, #435955 8px) right / 8px 8px no-repeat; }
.tab.wide { width: 240px; }
.tab.wide .t { -webkit-mask-image: linear-gradient(90deg, #000 148px, transparent 178px); mask-image: linear-gradient(90deg, #000 148px, transparent 178px); }
.new { width: 14px; height: 14px; align-self: center; margin-left: 14px; color: #fff; }
.winctl { margin-left: auto; display: flex; align-items: center; padding-right: 11px; }
.winctl svg { width: 14px; height: 14px; margin-left: 19px; }
.winctl svg:nth-child(2) { margin-left: 24px; }
.second .winctl svg:nth-child(n+2) { color: #7b8683; }
.second .new { color: #dde3e1; }

.toolbar { height: 41px; flex: none; background: #435955; color: #fff; display: flex; align-items: center; padding: 1px 6px 0 6px; }
.btn { width: 32px; display: flex; justify-content: center; flex: none; }
.btn svg { width: 18px; height: 18px; }
.btn.dim { color: #98a5a2; }
.toolbar > .btn:nth-child(-n+3) svg { width: 19px; height: 19px; }
.omnibox { flex: 1; height: 36px; border: 2px solid #8ab4f8; border-radius: 18px; background: #202124; margin: 0 4px 0 6px; display: flex; align-items: center; padding-left: 9px; font-size: 14.300px; letter-spacing: -.42px; color: #9fa3a8; }
.omnibox .lk { width: 13px; height: 14px; margin-right: 10px; color: #a9adb2; }
.omnibox .url { flex: 1; }
.omnibox b { font-weight: 400; color: #fff; }
.omnibox .btn svg { width: 16px; height: 16px; color: #b9bdc1; }
.omnibox .btn:last-child { margin-right: 1px; }
.second .omnibox { letter-spacing: -.3px; }
.avatar { width: 22px; height: 22px; border-radius: 50%; background: #5d4037; font-size: 12px; line-height: 22px; text-align: center; }

.bookmarks { height: 34px; flex: none; background: #435955; border-bottom: 1px solid #728884; color: #f1f4f3; display: grid; grid-template-columns: 149px 149px 153px 126px 108px 148px 148px 150px 148px 150px 149px 1fr 22px; align-items: center; padding: 0 11px 4px 14px; font-size: 14.700px; white-space: nowrap; }
.bookmarks span { display: flex; align-items: center; gap: 8px; }
.bookmarks svg { width: 16px; height: 16px; }
.bookmarks .more { font-size: 18px; padding-bottom: 3px; justify-content: center; }
.vue-b { font: 6.500px Inter, sans-serif; text-anchor: middle; fill: #fff; }

.viewport { flex: 1; min-height: 0; display: flex; background: #fff; overflow: hidden; }
.scrollbar { width: 15px; flex: none; background: #f0f0f0; color: #505050; display: flex; flex-direction: column; align-items: center; }
.scrollbar svg { width: 8px; height: 5px; margin-top: 6px; }
.scrollbar .thumb { width: 11px; background: #c1c1c1; }
.scrollbar .down { margin-top: auto; margin-bottom: 6px; }
.apple-sb .thumb { height: 162px; margin-top: 71px; }
.flutter-sb .thumb { height: 87px; margin-top: 73px; }

/* Developer portal */
.apple { flex: 1; overflow: hidden; padding: 1px 382px 0 383px; font-family: Inter, sans-serif; color: #333; font-size: 15.740px; }
.crumb { display: block; font-size: 12.780px; line-height: 18px; color: #0070c9; }
.head { display: flex; padding-top: 15px; height: 62px; align-items: flex-start; }
.head h1 { flex: 1; font-size: 23.070px; font-weight: 600; line-height: 28px; color: #111; }
.b { display: flex; align-items: center; justify-content: center; font-size: 12.730px; font-weight: 500; height: 30px; border-radius: 3px; }
.outline { border: 1px solid #0070c9; color: #0070c9; width: 72px; }
.head .b { margin-top: 4px; }
.head .off { background: #c9c9c9; color: #f4f4f4; width: 80px; margin-left: 7px; }
.pagetabs { display: flex; gap: 48px; border-top: 1px solid #d6d6d6; border-bottom: 1px solid #c8c8c8; height: 45px; font-size: 17.500px; line-height: 47px; }
.pagetabs .on { width: 97px; border-bottom: 2px solid #1583fb; }
.table { width: 1121px; }
.row { height: 57px; display: grid; grid-template-columns: 141px 55px 1fr; align-items: center; border-bottom: 1px solid #efefef; padding-bottom: 2px; }
.row.th { height: 53px; grid-template-columns: 141px 676px 1fr; font-size: 12.600px; color: #6e6e6e; padding: 20px 0 0; }
.row.last { border: 0; height: 56px; }
.ci { width: 32px; height: 32px; margin-left: 10px; }
.nm { display: flex; align-items: center; gap: 6px; }
.nm svg { width: 15px; height: 15px; margin-top: 2px; }
.cb { width: 13px; height: 13px; border: 1px solid #767676; border-radius: 2.500px; margin-top: -2px; background: #fff; }
.cb.disabled { border-color: #d0d0d0; background: #f8f8f8; margin-top: -2px; }
.row.tall { height: 66px; grid-template-columns: 141px 55px 457px auto 1fr; }
.tall .nm, .tall .ci { margin-bottom: 9px; }
.tall .review { width: 140px; height: 25px; margin-top: 3px; font-size: 12.200px; }
.dollar { font: 15px Inter, sans-serif; text-anchor: middle; fill: #ccc; }
.option { display: grid; grid-template-columns: 196px 20px auto; color: #bdbdbd; line-height: 20px; margin-top: -7px; }
.option .cb { margin-top: 8px; }
.radio { width: 13px; height: 13px; border-radius: 50%; border: 1px solid #c4c4c4; background: radial-gradient(circle, #c4c4c4 4px, #fff 4.500px); margin-top: 3px; }

/* Docs site */
.flutter { flex: 1; min-width: 0; display: flex; flex-direction: column; font-family: Inter, sans-serif; color: #4a4a4a; }
.site { height: 66px; flex: none; display: flex; align-items: center; padding-left: 17px; box-shadow: 0 2px 6px rgba(0, 0, 0, .14); position: relative; z-index: 1; background: #fff; }
.site .logo { width: 28px; height: 38px; }
.brand { font-size: 27.600px; margin-left: 14px; color: #757575; width: 886px; line-height: 60px; padding-top: 2px; }
.site nav { display: flex; font-size: 15.300px; color: #3c3c3c; }
.site nav span { display: flex; align-items: center; }
.site nav svg { width: 8px; height: 5px; margin-left: 9px; }
.n1 { width: 151px; } .n2 { width: 145px; } .n3 { width: 126px; } .n4 { width: 105px; } .n5 { width: 90px; }
.social { display: flex; align-items: center; }
.social svg { width: 24px; height: 24px; margin-right: 16px; }
.social svg:first-child { width: 22px; height: 22px; margin-right: 25px; }
.cta { width: 120px; height: 42px; background: #1389fd; color: #fff; font-size: 15.900px; font-weight: 500; display: flex; align-items: center; justify-content: center; }
.cols { flex: 1; min-height: 0; overflow: hidden; display: flex; }
.side { width: 318px; display: flex; border-right: 1px solid #dadada; overflow: hidden; }
.menu { width: 302px; padding-top: 4px; font-size: 15.200px; }
.menu p { height: 40px; padding: 0 21px 0 16px; display: flex; align-items: center; justify-content: space-between; }
.menu p svg { width: 14px; height: 10px; }
.menu .flip { transform: rotate(180deg); }
.menu .cur { font-weight: 600; }
.menu li { height: 29px; padding-left: 32px; font-size: 13.130px; line-height: 31px; color: #333; }
.menu ul + p { margin-top: 4px; }
.menu .here { color: #1389fd; font-weight: 500; }
.menu hr { margin: 4px 0; border: 0; border-top: 1px solid #d5d5d5; }
.side-sb .thumb { height: 400px; margin-top: 336px; flex: none; }
article { width: 1010px; margin-left: 180px; margin-top: -10px; font-size: 15.360px; line-height: 24px; white-space: nowrap; flex: none; }
article p { margin-bottom: 16px; }
article a, .cookies a { color: #1389fd; }
article b { font-weight: 600; }
article h2 { font-size: 30px; line-height: 36px; margin: 34px 0 16px; }
article h2.long { font-size: 30.340px; }
article ol { margin: 0 0 16px; padding-left: 40px; }
.toc { padding-top: 41px; margin-left: 105px; font-size: 13.500px; line-height: 18px; color: #1389fd; white-space: nowrap; }
.toc h3 { font-size: 19.200px; line-height: 26px; color: #4a4a4a; margin-bottom: 11px; }
.toc li { margin-bottom: 16px; }
.toc li ul { margin-top: 16px; padding-left: 23px; }
.toc li li { margin-bottom: 8px; }
.at { color: #6e7378; font-weight: 500; font-size: 13.680px; }
.cookies { height: 131px; flex: none; background: #fff; box-shadow: 0 -1px 4px rgba(0, 0, 0, .2); position: relative; z-index: 1; display: flex; align-items: center; padding-left: 437px; white-space: nowrap; font-size: 15.260px; line-height: 25.600px; }
.cookies p { width: 973px; padding-bottom: 3px; }
.okay { width: 58px; height: 42px; background: #1389fd; color: #fff; font-weight: 500; line-height: 42px; text-align: center; }

/* Dock */
.dock { height: 68px; flex: none; display: flex; background: #231520; }
.dock-icons { width: 816px; display: flex; }
.dock-icons span { width: 64px; height: 64px; margin: 2px 4px; display: flex; align-items: center; justify-content: center; border-radius: 4px; position: relative; }
.dock-icons svg { width: 48px; height: 48px; }
.fz { font: italic 800 37px Inter, sans-serif; letter-spacing: -4px; text-anchor: middle; fill: #fff; }
.run::after { content: ""; position: absolute; bottom: 0; left: 29px; width: 6px; height: 6px; border-radius: 50%; background: #e95420; }
.run.twice { background: #4c4049; }
.run.twice::after { left: 25px; box-shadow: 9px 0 #e95420; }
.dock-fill { width: 971px; background: #5f5f5f; }
.second .dock-fill { background: none; }
.dock-end { flex: 1; display: flex; align-items: center; padding-left: 82px; }
.dock-end svg { width: 30px; height: 30px; }
```
